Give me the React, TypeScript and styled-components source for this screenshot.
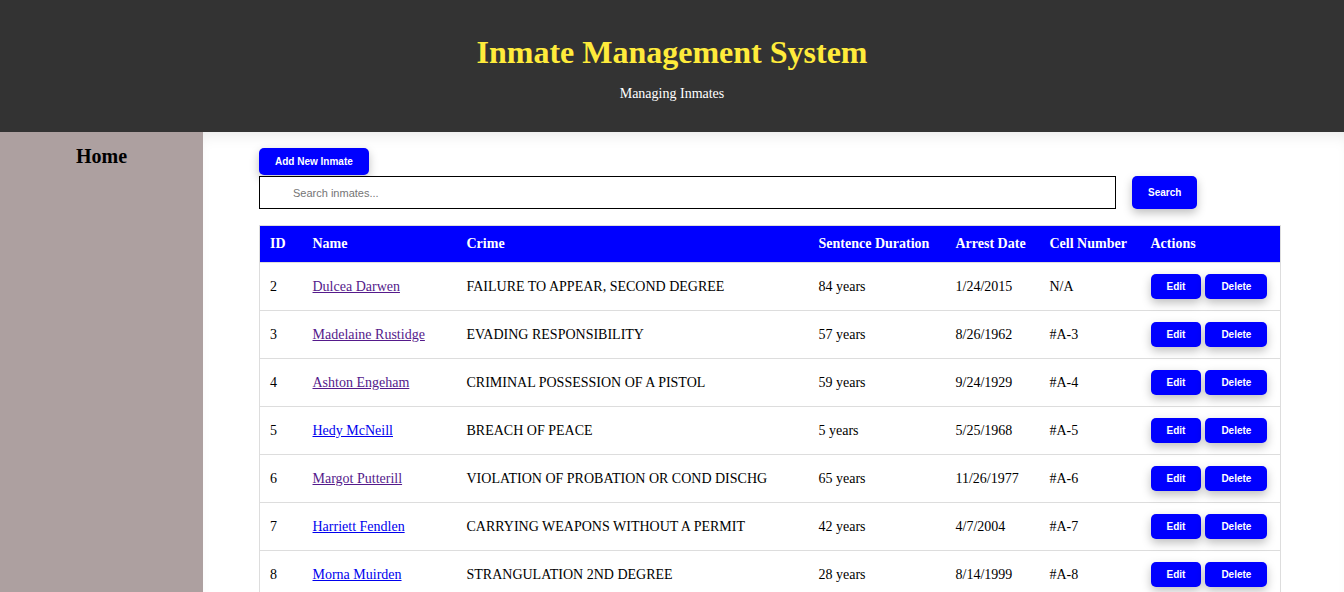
import React, { useState } from "react";
import styled, { createGlobalStyle } from "styled-components";

const GlobalStyle = createGlobalStyle`
  html, body {
    margin: 0;
    padding: 0;
    font-family: "Liberation Serif", "Times New Roman", serif;
    background: #fff;
  }
`;

const Page = styled.div`
  display: flex;
  flex-direction: column;
  min-height: 100vh;
`;

const Header = styled.header`
  background: #333333;
  height: 132px;
  box-sizing: border-box;
  padding-top: 33px;
  display: flex;
  flex-direction: column;
  align-items: center;
`;

const Title = styled.h1`
  margin: 0;
  color: #ffeb3b;
  font-size: 32px;
  line-height: 38px;
  font-weight: bold;
`;

const Subtitle = styled.p`
  margin: 15px 0 0;
  color: #fff;
  font-size: 14px;
  line-height: 16px;
`;

const Body = styled.div`
  display: flex;
  flex: 1;
`;

const Sidebar = styled.nav`
  width: 203px;
  flex-shrink: 0;
  background: #ada0a0;
  padding-top: 13px;
  box-sizing: border-box;
  text-align: center;
`;

const NavLink = styled.a`
  display: block;
  color: #000;
  font-weight: bold;
  font-size: 20px;
  line-height: 23px;
  text-decoration: none;
`;

const Main = styled.main`
  flex: 1;
  padding: 16px 64px 0 56px;
  box-shadow: inset 0 10px 16px -8px rgba(0, 0, 0, 0.1);
`;

const BlueButton = styled.button<{ $h?: number }>`
  background: #0000ff;
  color: #fff;
  border: none;
  border-radius: 5px;
  font-family: "Liberation Sans", Arial, sans-serif;
  font-size: 10px;
  font-weight: bold;
  height: ${(p) => p.$h ?? 25}px;
  padding: 0 16px;
  cursor: pointer;
  box-shadow: 0 4px 10px rgba(0, 0, 0, 0.25);
`;

const AddButton = styled(BlueButton)`
  display: block;
  margin-bottom: 1px;
`;

const SearchRow = styled.div`
  display: flex;
  align-items: center;
  gap: 16px;
  margin-bottom: 16px;
`;

const SearchInput = styled.input`
  width: 857px;
  height: 33px;
  box-sizing: border-box;
  border: 1px solid #000;
  padding: 0 0 0 33px;
  font-family: "Liberation Sans", Arial, sans-serif;
  font-size: 11px;
  &::placeholder {
    color: #757575;
  }
`;

const Table = styled.table`
  width: 1021px;
  border-collapse: collapse;
  table-layout: fixed;
  border: 1px solid #ddd;
  font-size: 14px;
`;

const Th = styled.th<{ $w: number }>`
  width: ${(p) => p.$w}px;
  box-sizing: border-box;
  background: #0000ff;
  color: #fff;
  text-align: left;
  font-weight: bold;
  padding: 10px 10px;
  line-height: 16px;
  white-space: nowrap;
`;

const Td = styled.td`
  padding: 11px 10px;
  border-top: 1px solid #ddd;
  line-height: 25px;
  color: #000;
  white-space: nowrap;
`;

const NameLink = styled.a<{ $visited?: boolean }>`
  color: ${(p) => (p.$visited ? "#551a8b" : "#0000ee")};
  text-decoration: underline;
`;

const Actions = styled.div`
  display: flex;
  gap: 4px;
`;

type Inmate = {
  id: number;
  name: string;
  crime: string;
  sentence: string;
  arrested: string;
  cell: string;
  visited: boolean;
};

const inmates: Inmate[] = [
  { id: 2, name: "Dulcea Darwen", crime: "FAILURE TO APPEAR, SECOND DEGREE", sentence: "84 years", arrested: "1/24/2015", cell: "N/A", visited: true },
  { id: 3, name: "Madelaine Rustidge", crime: "EVADING RESPONSIBILITY", sentence: "57 years", arrested: "8/26/1962", cell: "#A-3", visited: true },
  { id: 4, name: "Ashton Engeham", crime: "CRIMINAL POSSESSION OF A PISTOL", sentence: "59 years", arrested: "9/24/1929", cell: "#A-4", visited: true },
  { id: 5, name: "Hedy McNeill", crime: "BREACH OF PEACE", sentence: "5 years", arrested: "5/25/1968", cell: "#A-5", visited: false },
  { id: 6, name: "Margot Putterill", crime: "VIOLATION OF PROBATION OR COND DISCHG", sentence: "65 years", arrested: "11/26/1977", cell: "#A-6", visited: true },
  { id: 7, name: "Harriett Fendlen", crime: "CARRYING WEAPONS WITHOUT A PERMIT", sentence: "42 years", arrested: "4/7/2004", cell: "#A-7", visited: false },
  { id: 8, name: "Morna Muirden", crime: "STRANGULATION 2ND DEGREE", sentence: "28 years", arrested: "8/14/1999", cell: "#A-8", visited: false },
];

const columns: [string, number][] = [
  ["ID", 43],
  ["Name", 154],
  ["Crime", 352],
  ["Sentence Duration", 137],
  ["Arrest Date", 94],
  ["Cell Number", 101],
  ["Actions", 140],
];

const App = () => {
  const [query, setQuery] = useState("");

  return (
    <Page>
      <GlobalStyle />
      <Header>
        <Title>Inmate Management System</Title>
        <Subtitle>Managing Inmates</Subtitle>
      </Header>
      <Body>
        <Sidebar>
          <NavLink href="#">Home</NavLink>
        </Sidebar>
        <Main>
          <AddButton $h={27}>Add New Inmate</AddButton>
          <SearchRow>
            <SearchInput
              placeholder="Search inmates..."
              value={query}
              onChange={(e) => setQuery(e.target.value)}
            />
            <BlueButton $h={33}>Search</BlueButton>
          </SearchRow>
          <Table>
            <thead>
              <tr>
                {columns.map(([label, w]) => (
                  <Th key={label} $w={w}>
                    {label}
                  </Th>
                ))}
              </tr>
            </thead>
            <tbody>
              {inmates.map((i) => (
                <tr key={i.id}>
                  <Td>{i.id}</Td>
                  <Td>
                    <NameLink href="#" $visited={i.visited}>
                      {i.name}
                    </NameLink>
                  </Td>
                  <Td>{i.crime}</Td>
                  <Td>{i.sentence}</Td>
                  <Td>{i.arrested}</Td>
                  <Td>{i.cell}</Td>
                  <Td>
                    <Actions>
                      <BlueButton>Edit</BlueButton>
                      <BlueButton>Delete</BlueButton>
                    </Actions>
                  </Td>
                </tr>
              ))}
            </tbody>
          </Table>
        </Main>
      </Body>
    </Page>
  );
};

export default App;
